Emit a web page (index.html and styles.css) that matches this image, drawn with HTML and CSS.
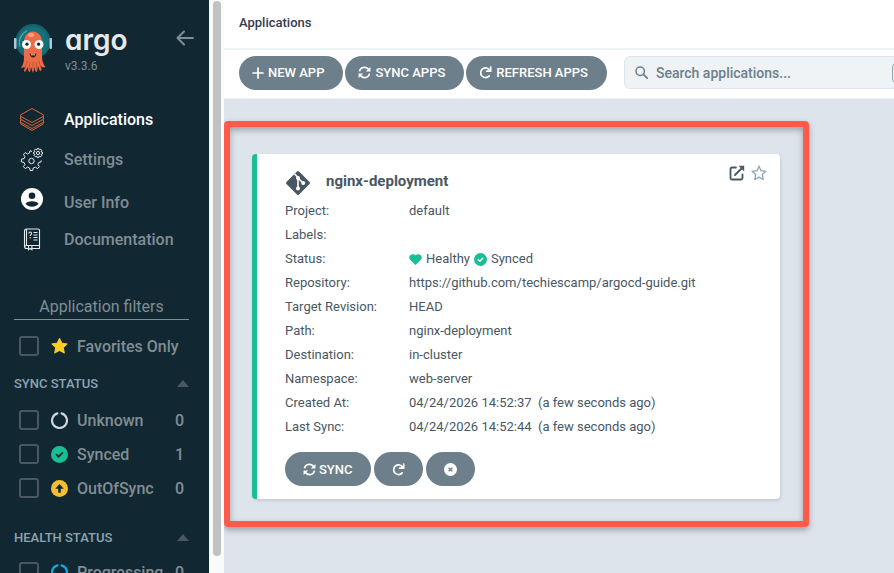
FILE: index.html
```
<!DOCTYPE html>
<html lang="en">
<head>
    <meta charset="utf-8">
    <meta name="viewport" content="width=device-width, initial-scale=1">
    <title>Applications</title>
    <link rel="stylesheet" href="styles.css">
</head>
<body>

<!-- shared icons -->
<svg class="defs" aria-hidden="true">
    <symbol id="sync" viewBox="0 0 14 14">
        <path d="M1.6 5.8A5.4 5.4 0 0 1 11 3.4L12 4.6M12.4 8.2A5.4 5.4 0 0 1 3 10.6L2 9.4" fill="none" stroke="currentColor" stroke-width="1.8"/>
        <path d="M13.4 1v5H8.4zM.6 13V8h5z" fill="currentColor"/>
    </symbol>
    <symbol id="redo" viewBox="0 0 14 14">
        <path d="M11.6 4.8A5.2 5.2 0 1 0 11 10.6" fill="none" stroke="currentColor" stroke-width="1.8" stroke-linecap="round"/>
        <path d="M12.6 1.2v4.4H8.2" fill="none" stroke="currentColor" stroke-width="1.8" stroke-linecap="round" stroke-linejoin="round"/>
    </symbol>
    <symbol id="check" viewBox="0 0 16 16">
        <circle cx="8" cy="8" r="8" fill="#18be94"/>
        <path d="M5.2 8.2l2 1.900 3.600-3.700" fill="none" stroke="currentColor" stroke-width="1.7" stroke-linecap="round" stroke-linejoin="round"/>
    </symbol>
    <symbol id="notch" viewBox="0 0 16 16">
        <path d="M10 1.3a7 7 0 1 1-4 0" fill="none" stroke="currentColor" stroke-width="2" stroke-linecap="round"/>
    </symbol>
    <symbol id="ring" viewBox="0 0 16 16">
        <path d="M10 1.3a7 7 0 0 1 0 13.4M6 14.7a7 7 0 0 1 0-13.4" fill="none" stroke="currentColor" stroke-width="2" stroke-linecap="round"/>
    </symbol>
</svg>

<div class="layout">
    <aside class="sidebar">
        <div class="logo">
            <svg width="38" height="52" viewBox="14 23 38 52" aria-hidden="true">
                <circle cx="33" cy="41.500" r="17.500" fill="#17616d"/>
                <circle cx="33" cy="42" r="15.500" fill="#127178"/>
                <rect x="14" y="38" width="2.500" height="11" rx="1" fill="#a9cbe0"/>
                <rect x="49.500" y="38" width="2.500" height="11" rx="1" fill="#a9cbe0"/>
                <path d="M19.500 46a14 14 0 0 1 7-15" fill="none" stroke="#5ba6ab" stroke-width="1.300" stroke-linecap="round"/>
                <path d="M24 42c0-14 18-14 18 0v14c0 6 2 9 3.500 11-2 1-3.500 0-4.500-1 0 2 1 4 0 5-2 0-2-3-3-5l-1 6c-2 0-2-3-2-5l-2 6-2-6-1 5c-2 0-2-3-2-5l-3 5c-2-1 0-3 0-5l-4 1c2-3 3-6 3-12z" fill="#ed6b47"/>
                <path d="M27 61l-2 7M30 62l-1 8M33 62v8M36 62l1 8M39 61l2 7" stroke="#b84a32" stroke-width=".8" fill="none"/>
                <ellipse cx="31" cy="35" rx="3" ry="2" fill="#f9a083"/>
                <circle cx="26.500" cy="44.500" r="4.500" fill="#fff"/>
                <circle cx="39" cy="44.500" r="4.500" fill="#fff"/>
                <circle cx="27" cy="44.200" r="1.600" fill="#182126"/>
                <circle cx="38.600" cy="44.200" r="1.600" fill="#182126"/>
                <path d="M29.500 53.500q3.500 1.500 7 0-1 4-3.500 4t-3.500-4z" fill="#3a1513"/>
                <path d="M31 54.200q2 .6 4 0v1h-4z" fill="#fff"/>
            </svg>
            <div class="logo-text">
                <span class="logo-name">argo</span>
                <span class="version">v3.3.6</span>
            </div>
            <button class="collapse" type="button" aria-label="Collapse sidebar">
                <svg width="18" height="16" viewBox="0 0 18 16"><path d="M8 1.500L1.500 8 8 14.500M1.500 8H17" fill="none" stroke="currentColor" stroke-width="2" stroke-linecap="round" stroke-linejoin="round"/></svg>
            </button>
        </div>

        <nav class="nav">
            <a class="active" href="#">
                <svg width="24" height="24" viewBox="0 0 24 24" fill="none" stroke="#dc6339" stroke-linejoin="round"><path d="M12 1.500L.6 7.800v1.500L12 15.500l11.400-6.200V7.800zM.6 9.300v3L12 18.500l11.400-6.200v-3M.6 12.300v3L12 21.500l11.400-6.200v-3M.6 15.300v1.500L12 23.500l11.400-6.700v-1.500"/></svg>
                Applications
            </a>
            <a href="#">
                <svg width="24" height="24" viewBox="0 0 24 24" fill="none" stroke="#e6eaec" stroke-linejoin="round">
                    <path d="M12 4.500l-2-.8-.6 2.300-2 1-2.200-1.400-1.800 1.800 1.500 2.200-.9 2.100-2.600.5v2.700l2.600.5.9 2.100-1.500 2.200 1.900 1.900 2.200-1.500 2.100.9.500 2.500h2.600l.5-2.500 2.100-.9 2.200 1.500 1.900-1.900-1.500-2.200.9-2.100 2.300-.5v-1.500"/>
                    <circle cx="11.500" cy="14" r="2.700"/>
                    <circle cx="18" cy="6" r="1.600"/>
                    <path d="M17.200 1.500h1.600l.4 1.400 1.500-.7 1.100 1.100-.7 1.500 1.400.4v1.600l-1.400.4.7 1.500-1.100 1.100-1.500-.7-.4 1.400h-1.600l-.4-1.400-1.500.7-1.100-1.100.7-1.500-1.400-.4V5.200l1.400-.4-.7-1.500 1.100-1.100 1.500.7z"/>
                </svg>
                Settings
            </a>
            <a class="user" href="#">
                <svg width="24" height="24" viewBox="0 0 24 24"><circle cx="12" cy="12" r="11" fill="#fff"/><g fill="#112833"><circle cx="12" cy="8.800" r="3.300"/><path d="M5.500 16.800C7 13.400 17 13.400 18.500 16.800 15.500 20.700 8.500 20.700 5.500 16.800z"/></g></svg>
                <span>User Info</span>
            </a>
            <a href="#">
                <svg width="24" height="24" viewBox="0 0 24 24" fill="none" stroke="#e6eaec" stroke-width="1.100">
                    <path d="M8 21.500H6.500a2 2 0 0 1-2-2V4a2 2 0 0 1 2-2H18a1.500 1.500 0 0 1 1.500 1.500v15h-13a2 2 0 0 0-2 1.500M19.500 18.500v3H12M6.500 2v16.500"/>
                    <path d="M8.500 18.500v4.200l1.700-1.200 1.700 1.200v-4.200M13.500 5.500h4M13.500 8h4M13.500 10.500h4M13.500 13h4M8.800 6.500c0-2 2.800-2 2.800 0 0 1.200-1.400 1-1.400 2.500M10.200 10.200v1.200"/>
                </svg>
                Documentation
            </a>
        </nav>

        <section class="filters">
            <h2 class="filters-title">Application filters</h2>
            <label class="filter">
                <input type="checkbox">
                <svg width="18" height="18" viewBox="0 0 18 18"><path d="M9 .8l2.500 5.200 5.700.8-4.100 4 1 5.700L9 13.800l-5.100 2.700 1-5.700-4.100-4 5.700-.8z" fill="#ffce25" stroke="#ffce25" stroke-linejoin="round"/></svg>
                Favorites Only
            </label>

            <h3 class="group">SYNC STATUS <i class="caret"></i></h3>
            <label class="filter">
                <input type="checkbox">
                <svg class="c-unknown" width="17" height="17"><use href="#notch"/></svg>
                Unknown <span class="count">0</span>
            </label>
            <label class="filter">
                <input type="checkbox">
                <svg class="c-dark" width="17" height="17"><use href="#check"/></svg>
                Synced <span class="count">1</span>
            </label>
            <label class="filter">
                <input type="checkbox">
                <svg width="17" height="17" viewBox="0 0 16 16"><circle cx="8" cy="8" r="8" fill="#f4c030"/><path d="M8 12V6" stroke="#112833" stroke-width="2.400"/><path d="M4 8.200L8 3.800l4 4.400z" fill="#112833"/></svg>
                OutOfSync <span class="count">0</span>
            </label>

            <h3 class="group">HEALTH STATUS <i class="caret"></i></h3>
            <label class="filter">
                <input type="checkbox">
                <svg class="c-progress" width="17" height="17"><use href="#ring"/></svg>
                Progressing <span class="count">0</span>
            </label>
        </section>
    </aside>

    <div class="gutter"><div class="thumb"></div></div>

    <main class="main">
        <h1 class="topbar">Applications</h1>
        <div class="toolbar">
            <button class="btn" type="button">
                <svg width="12" height="12" viewBox="0 0 12 12"><path d="M6 1v10M1 6h10" stroke="currentColor" stroke-width="1.700" stroke-linecap="round"/></svg>
                NEW APP
            </button>
            <button class="btn" type="button">
                <svg width="13" height="13"><use href="#sync"/></svg>
                SYNC APPS
            </button>
            <button class="btn" type="button">
                <svg width="13" height="13"><use href="#redo"/></svg>
                REFRESH APPS
            </button>
            <div class="search">
                <svg width="13" height="13" viewBox="0 0 13 13"><circle cx="5.200" cy="5.200" r="4.200" fill="none" stroke="currentColor" stroke-width="1.500"/><path d="M8.400 8.400l3.800 3.800" stroke="currentColor" stroke-width="1.700" stroke-linecap="round"/></svg>
                <input type="text" placeholder="Search applications..." aria-label="Search applications">
                <span class="key"></span>
            </div>
        </div>

        <div class="highlight">
            <article class="tile">
                <header class="tile-head">
                    <svg width="26" height="26" viewBox="0 0 26 26" aria-hidden="true">
                        <path d="M13 2.500L23.500 13 13 23.500 2.500 13z" fill="#495763" stroke="#495763" stroke-width="3" stroke-linejoin="round"/>
                        <path d="M9.500 3.800L13 7.500V18M13 8l5 5" fill="none" stroke="#fff" stroke-width="1.600"/>
                        <circle cx="13" cy="8" r="2" fill="#fff"/><circle cx="18.200" cy="13" r="2" fill="#fff"/><circle cx="13" cy="18.500" r="2" fill="#fff"/>
                    </svg>
                    <h2>nginx-deployment</h2>
                    <div class="tile-tools">
                        <button type="button" aria-label="Open application">
                            <svg width="16" height="16" viewBox="0 0 16 16"><path d="M7 2.500H3A1.500 1.500 0 0 0 1.500 4v9A1.500 1.500 0 0 0 3 14.500h9a1.500 1.500 0 0 0 1.500-1.500V9.500M6 10l7-7" fill="none" stroke="#495763" stroke-width="1.800" stroke-linecap="round"/><path d="M9.500.8h5.700v5.700z" fill="#495763"/></svg>
                        </button>
                        <button type="button" aria-label="Add to favorites">
                            <svg width="16" height="16" viewBox="0 0 16 16"><path d="M8 1.200l2 4.500 4.900.6-3.600 3.300.9 4.900L8 12.100l-4.200 2.400.9-4.900L1.100 6.300 6 5.700z" fill="none" stroke="#8fa4b1" stroke-width="1.300" stroke-linejoin="round"/></svg>
                        </button>
                    </div>
                </header>

                <dl class="details">
                    <dt>Project:</dt><dd>default</dd>
                    <dt>Labels:</dt><dd></dd>
                    <dt>Status:</dt>
                    <dd class="status">
                        <svg width="13" height="13" viewBox="0 0 14 14"><path d="M7 13L1.200 7.200C-2 3.500 3.500-1 7 2.800 10.500-1 16 3.500 12.800 7.200z" fill="#18be94"/></svg>
                        <span>Healthy</span>
                        <svg width="13" height="13"><use href="#check"/></svg>
                        <span>Synced</span>
                    </dd>
                    <dt>Repository:</dt><dd>https://github.com/techiescamp/argocd-guide.git</dd>
                    <dt>Target Revision:</dt><dd>HEAD</dd>
                    <dt>Path:</dt><dd>nginx-deployment</dd>
                    <dt>Destination:</dt><dd>in-cluster</dd>
                    <dt>Namespace:</dt><dd>web-server</dd>
                    <dt>Created At:</dt><dd>04/24/2026 14:52:37 &nbsp;(a few seconds ago)</dd>
                    <dt>Last Sync:</dt><dd>04/24/2026 14:52:44 &nbsp;(a few seconds ago)</dd>
                </dl>

                <div class="actions">
                    <button class="btn" type="button"><svg width="13" height="13"><use href="#sync"/></svg>SYNC</button>
                    <button class="btn" type="button" aria-label="Refresh"><svg width="13" height="13"><use href="#redo"/></svg></button>
                    <button class="btn" type="button" aria-label="Delete"><svg width="13" height="13" viewBox="0 0 14 14"><circle cx="7" cy="7" r="7" fill="#fff"/><path d="M5 5l4 4M9 5l-4 4" stroke="#6d7f8b" stroke-width="1.500"/></svg></button>
                </div>
            </article>
        </div>
    </main>
</div>

</body>
</html>
```
FILE: styles.css
```
* { box-sizing: border-box; margin: 0; padding: 0; }
body { background: #dee4eb; font-family: Roboto, "Liberation Sans", sans-serif; font-size: 13px; color: #495763; }
button { border: 0; background: none; font: inherit; cursor: pointer; }
svg { flex: none; display: block; }
.defs { position: absolute; width: 0; height: 0; }

.layout { display: flex; height: 100vh; overflow: hidden; }

/* sidebar */
.sidebar { flex: none; width: 209px; overflow: hidden; background: #112833; color: #818d94; font-size: 16px; font-weight: 500; }
.logo { display: flex; align-items: flex-start; height: 99px; padding: 23px 15px 0 14px; }
.logo-text { margin-left: 13px; }
.logo-name { display: block; height: 35px; font: 600 28px/34px Inter, sans-serif; font-feature-settings: "cv11"; color: #e6e9eb; }
.version { display: block; font-size: 12px; line-height: 16px; font-weight: 400; }
.collapse { margin: 7px 0 0 auto; color: #818d94; }

.nav a { display: flex; align-items: center; gap: 20px; height: 40px; padding-left: 20px; color: #818d94; text-decoration: none; }
.nav a.active { color: #fff; }
.nav .user span { padding-top: 6px; }

.filters { padding: 35px 20px 0 14px; }
.filters-title { border-bottom: 1px solid #818d94; font-size: 16px; line-height: 25px; font-weight: 400; text-align: center; }
.filter { display: flex; align-items: center; height: 34px; padding: 0 5px; }
.filters-title + .filter { margin-top: 9px; }
.filter input { appearance: none; width: 20px; height: 20px; margin-right: 12px; border: 2px solid #495763; border-radius: 3px; }
.filter svg { width: 17px; margin-right: 9px; }
.filter .count { margin-left: auto; }
.group { display: flex; align-items: center; justify-content: space-between; height: 20px; margin: 10px 0; font-size: 13px; font-weight: 500; color: #8fa4b1; }
.filter + .filter + .group { margin-top: 22px; margin-bottom: 8px; }
.caret { border: 6px solid transparent; border-top: 0; border-bottom: 7px solid #495763; }
.c-unknown { color: #ccd6dd; }
.c-dark { color: #112833; }
.c-progress { color: #0dadea; }

.gutter { flex: none; width: 15px; padding: 1px 3px 0 4px; background: #fafafa; }
.thumb { height: 97%; border-radius: 4px; background: #c1c1c1; }

/* content */
.main { flex: 1; min-width: 0; overflow: hidden; }
.topbar { height: 50px; padding-left: 15px; border-bottom: 2px solid #edf2f5; background: #fff; font-size: 13px; line-height: 46px; font-weight: 500; color: #363c4a; }
.toolbar { display: flex; align-items: center; gap: 2px; height: 49px; padding: 0 15px 3px; border-bottom: 1px solid #edf2f5; background: #fff; }

.btn { display: flex; flex: none; align-items: center; gap: 4px; height: 34px; padding: 0 19px 0 13px; border-radius: 17px; background: #6d7f8b; color: #fff; font-size: 13px; font-weight: 500; }

.search { display: flex; flex: 1 0 300px; align-items: center; height: 33px; margin-left: 15px; padding: 0 10px; border: 1px solid #dee6eb; border-radius: 6px; background: #eff3f5; color: #6d7f8b; }
.search input { width: 225px; margin: 0 11px 0 8px; border: 0; outline: 0; background: none; font: 500 14px Roboto, sans-serif; color: inherit; }
.search input::placeholder { color: #6d7f8b; }
.key { width: 20px; height: 20px; border: 1px solid #8fa4b1; border-radius: 4px; }

/* application tile */
.highlight { max-width: 585px; margin-top: 22px; padding: 27px 23px 22px 22px; border: 6px solid #ff5a4a; border-radius: 4px; box-shadow: 0 3px 6px rgba(0, 0, 0, .3), inset 0 3px 6px rgba(0, 0, 0, .3); }
.tile { padding: 13px 13px 13px 28px; border-left: 5px solid #18be94; border-radius: 4px; background: #fff; box-shadow: 1px 2px 3px rgba(0, 0, 0, .1); }
.tile-head { display: flex; align-items: flex-start; height: 32px; }
.tile-head > svg { margin-top: 3px; }
.tile-head h2 { margin: 0 auto 0 15px; font-size: 15px; line-height: 28px; font-weight: 700; }
.tile-tools { display: flex; gap: 6px; margin-top: -2px; }
.details { display: grid; grid-template-columns: 124px 1fr; grid-auto-rows: 24px; line-height: 24px; }
.status { display: flex; align-items: center; gap: 4px; }
.status svg { color: #fff; }
.actions { display: flex; gap: 3px; margin-top: 13px; }
.actions .btn { gap: 3px; padding: 0 18px; }
```
